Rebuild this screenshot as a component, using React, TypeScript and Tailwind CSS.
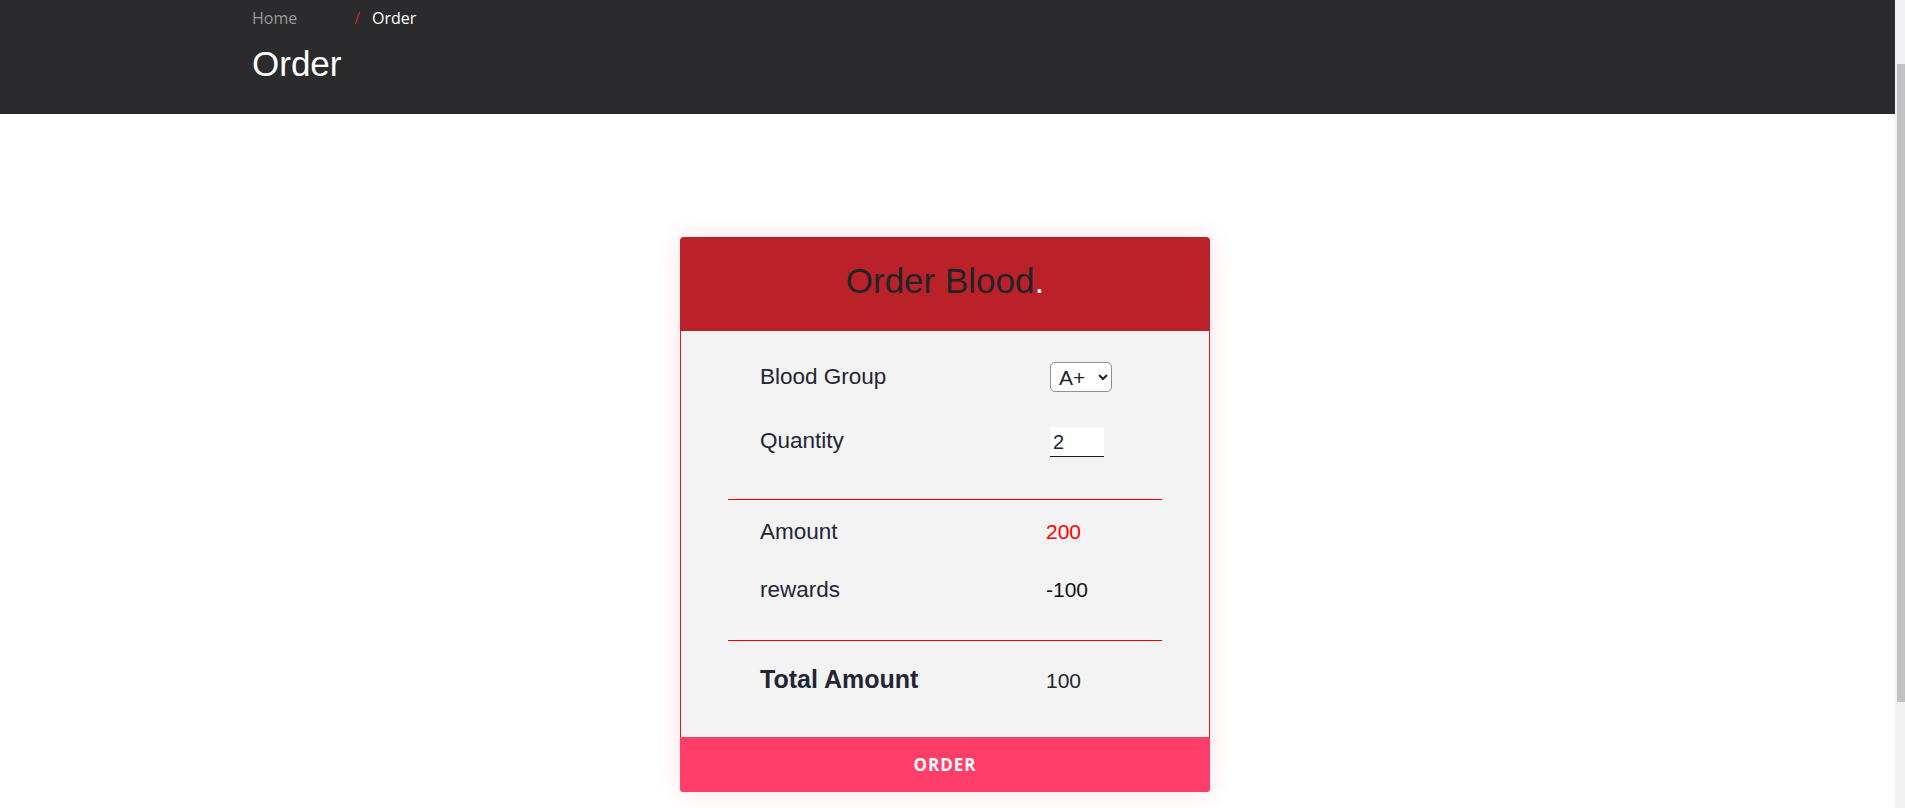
import { useState } from 'react';

export default function App() {
  const [group, setGroup] = useState('A+');
  const [qty, setQty] = useState('2');

  return (
    <div className="flex h-screen overflow-hidden bg-white">
      <main className="flex-1 overflow-hidden">
        {/* Page title */}
        <section className="bg-[#2b2b2d] h-[114px] pt-[6px] px-[252px]">
          <div className="flex items-center text-[16px] leading-6 font-['Open_Sans',sans-serif]">
            <a href="#" className="text-[#9a9a9a]">Home</a>
            <span className="ml-[57px] text-[#d4202c]">/</span>
            <span className="ml-[12px] text-white">Order</span>
          </div>
          <h1 className="mt-[14px] text-[35px] leading-[40px] text-white font-['Liberation_Sans',Arial,sans-serif]">
            Order
          </h1>
        </section>

        {/* Order card */}
        <section className="pt-[123px] pb-[150px] pr-[5px]">
          <div className="mx-auto w-[530px] rounded-t-[4px] shadow-[0_0_24px_rgba(215,40,60,0.14)] font-['Liberation_Sans',Arial,sans-serif]">
            <div className="h-[94px] pt-[24px] bg-[#bb2129] rounded-t-[4px] text-center">
              <h2 className="text-[35px] leading-[40px] text-[#212529]">
                Order Blood<span className="text-white">.</span>
              </h2>
            </div>

            <div className="bg-[#f3f3f3] border-x border-[#e3161e] pt-[30px] pb-[40px]">
              <div className="grid grid-cols-[286px_1fr] items-center pl-[79px] h-[32px]">
                <span className="text-[22.5px] leading-8 text-[#232536]">Blood Group</span>
                <select
                  value={group}
                  onChange={e => setGroup(e.target.value)}
                  className="ml-[4px] w-[62px] h-[30px] pl-[4px] rounded-[5px] border border-[#8f8f8f] bg-white text-[21px] text-[#212529]"
                >
                  {['A+', 'A-', 'B+', 'B-', 'AB+', 'AB-', 'O+', 'O-'].map(g => (
                    <option key={g} value={g}>{g}</option>
                  ))}
                </select>
              </div>

              <div className="grid grid-cols-[286px_1fr] items-center pl-[79px] h-[32px] mt-[32px]">
                <span className="text-[22.5px] leading-8 text-[#232536]">Quantity</span>
                <input
                  type="number"
                  value={qty}
                  onChange={e => setQty(e.target.value)}
                  className="ml-[4px] mt-[2px] w-[54px] h-[30px] pl-[3px] bg-white border-b-[1.5px] border-[#1c1c1c] text-[20px] text-[#212529] outline-none"
                />
              </div>

              <div className="mx-[47px] mt-[42px] h-px bg-[#e80000]" />

              <div className="grid grid-cols-[286px_1fr] items-baseline pl-[79px] mt-[16px]">
                <span className="text-[22.5px] leading-8 text-[#232536]">Amount</span>
                <span className="text-[21px] leading-8 text-[#ff0000]">200</span>
              </div>

              <div className="grid grid-cols-[286px_1fr] items-baseline pl-[79px] mt-[26px]">
                <span className="text-[22.5px] leading-8 text-[#232536]">rewards</span>
                <span className="text-[21px] leading-8 text-[#111111]">-100</span>
              </div>

              <div className="mx-[47px] mt-[34px] h-px bg-[#e80000]" />

              <div className="grid grid-cols-[286px_1fr] items-baseline pl-[79px] mt-[22px]">
                <span className="text-[25px] leading-8 font-bold text-[#232536]">Total Amount</span>
                <span className="text-[21px] leading-8 text-[#232536]">100</span>
              </div>
            </div>

            <button className="w-full h-[55px] flex items-center justify-center bg-[#ff3d69] rounded-b-[3px] text-white text-[17px] font-bold tracking-[1px] font-['Open_Sans',sans-serif]">
              ORDER
            </button>
          </div>
        </section>
      </main>

      {/* Scrollbar */}
      <div className="w-[10px] shrink-0 bg-[#f1f1f1] pt-[64px]">
        <div className="ml-[2px] h-[638px] bg-[#c1c1c1]" />
      </div>
    </div>
  );
}
